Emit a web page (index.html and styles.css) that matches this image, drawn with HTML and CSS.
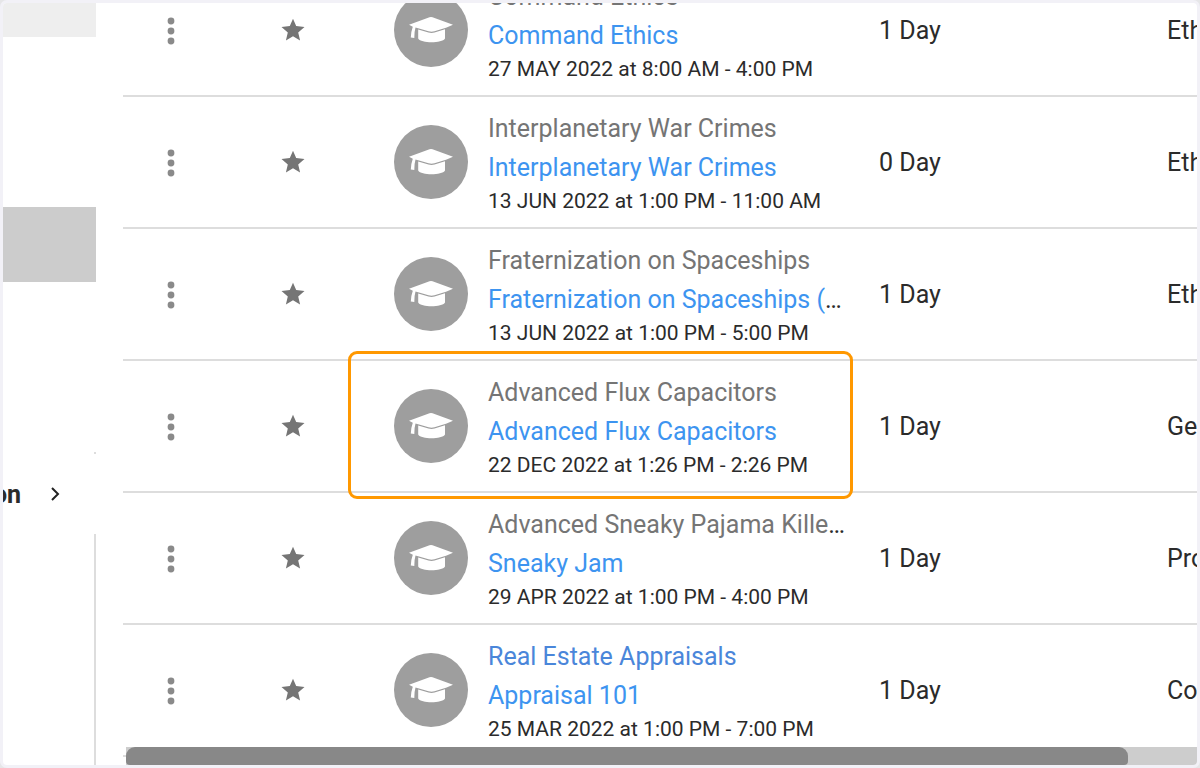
FILE: index.html
```
<!DOCTYPE html>
<html lang="en">
<head>
<meta charset="utf-8">
<meta name="viewport" content="width=device-width, initial-scale=1">
<title>Courses</title>
<link rel="stylesheet" href="styles.css">
</head>
<body>
<svg class="symbols" aria-hidden="true">
  <symbol id="dots" viewBox="0 0 8 30"><circle cx="4" cy="6" r="3.4"/><circle cx="4" cy="16" r="3.4"/><circle cx="4" cy="26" r="3.4"/></symbol>
  <symbol id="star" viewBox="0 0 24 24"><path d="M12 0.800L15.200 8.100L23.500 8.900L17.200 14.400L19.100 22.500L12 18.300L4.900 22.500L6.800 14.400L0.500 8.900L8.800 8.100Z"/></symbol>
  <symbol id="cap" viewBox="0 0 74 74"><path d="M15 31.800L35.500 24.300Q37 23.800 38.500 24.300L59 31.800L52 34.800L40.500 38.300Q37.500 39.100 34.500 38.300L21.500 34.600Q20.200 39 20.300 45L16.800 44.500Q17 38.500 18.800 33.700Z"/><path d="M24.200 36.600L34.500 39.600Q37.500 40.400 40.500 39.600L51 36.200V45.600C48 50.600 27 50.600 24.200 45.600Z"/></symbol>
</svg>
<div class="frame">
  <aside class="sidebar">
    <div class="block block-light"></div>
    <div class="block block-dark"></div>
    <div class="side-rule side-rule-end"></div>
    <a class="side-link" href="#">on
      <svg class="chevron" viewBox="0 0 10 14" aria-hidden="true"><path d="M2 1L8 7L2 13"/></svg>
    </a>
    <div class="side-rule"></div>
  </aside>
  <main class="content">
    <table class="courses">
      <colgroup><col class="col-menu"><col class="col-star"><col class="col-course"><col class="col-days"><col class="col-type"></colgroup>
      <tbody>
        <tr>
          <td><button aria-label="More options"><svg class="dots"><use href="#dots"/></svg></button></td>
          <td><button aria-label="Favorite"><svg class="star"><use href="#star"/></svg></button></td>
          <td class="course"><div class="entry"><svg class="avatar" aria-hidden="true"><use href="#cap"/></svg><div class="details"><div class="line"><span class="name">Command Ethics</span></div><div class="line"><a href="#">Command Ethics</a></div><div class="date">27 MAY 2022 at 8:00 AM - 4:00 PM</div></div></div></td>
          <td class="value">1 Day</td><td class="value">Eth</td>
        </tr>
        <tr>
          <td><button aria-label="More options"><svg class="dots"><use href="#dots"/></svg></button></td>
          <td><button aria-label="Favorite"><svg class="star"><use href="#star"/></svg></button></td>
          <td class="course"><div class="entry"><svg class="avatar" aria-hidden="true"><use href="#cap"/></svg><div class="details"><div class="line"><span class="name">Interplanetary War Crimes</span></div><div class="line"><a href="#">Interplanetary War Crimes</a></div><div class="date">13 JUN 2022 at 1:00 PM - 11:00 AM</div></div></div></td>
          <td class="value">0 Day</td><td class="value">Eth</td>
        </tr>
        <tr>
          <td><button aria-label="More options"><svg class="dots"><use href="#dots"/></svg></button></td>
          <td><button aria-label="Favorite"><svg class="star"><use href="#star"/></svg></button></td>
          <td class="course"><div class="entry"><svg class="avatar" aria-hidden="true"><use href="#cap"/></svg><div class="details"><div class="line"><span class="name">Fraternization on Spaceships</span></div><div class="line"><a href="#">Fraternization on Spaceships (</a>…</div><div class="date">13 JUN 2022 at 1:00 PM - 5:00 PM</div></div></div></td>
          <td class="value">1 Day</td><td class="value">Eth</td>
        </tr>
        <tr>
          <td><button aria-label="More options"><svg class="dots"><use href="#dots"/></svg></button></td>
          <td><button aria-label="Favorite"><svg class="star"><use href="#star"/></svg></button></td>
          <td class="course highlighted"><div class="entry"><svg class="avatar" aria-hidden="true"><use href="#cap"/></svg><div class="details"><div class="line"><span class="name">Advanced Flux Capacitors</span></div><div class="line"><a href="#">Advanced Flux Capacitors</a></div><div class="date">22 DEC 2022 at 1:26 PM - 2:26 PM</div></div></div></td>
          <td class="value">1 Day</td><td class="value">Ge</td>
        </tr>
        <tr>
          <td><button aria-label="More options"><svg class="dots"><use href="#dots"/></svg></button></td>
          <td><button aria-label="Favorite"><svg class="star"><use href="#star"/></svg></button></td>
          <td class="course"><div class="entry"><svg class="avatar" aria-hidden="true"><use href="#cap"/></svg><div class="details"><div class="line"><span class="name">Advanced Sneaky Pajama Kille</span>…</div><div class="line"><a href="#">Sneaky Jam</a></div><div class="date">29 APR 2022 at 1:00 PM - 4:00 PM</div></div></div></td>
          <td class="value">1 Day</td><td class="value">Pro</td>
        </tr>
        <tr>
          <td><button aria-label="More options"><svg class="dots"><use href="#dots"/></svg></button></td>
          <td><button aria-label="Favorite"><svg class="star"><use href="#star"/></svg></button></td>
          <td class="course"><div class="entry"><svg class="avatar" aria-hidden="true"><use href="#cap"/></svg><div class="details"><div class="line"><a class="visited" href="#">Real Estate Appraisals</a></div><div class="line"><a href="#">Appraisal 101</a></div><div class="date">25 MAR 2022 at 1:00 PM - 7:00 PM</div></div></div></td>
          <td class="value">1 Day</td><td class="value">Co</td>
        </tr>
      </tbody>
    </table>
    <div class="scrollbar"><div class="thumb"></div></div>
  </main>
</div>
</body>
</html>
```
FILE: styles.css
```
* { box-sizing: border-box; }

body {
  margin: 0;
  background: #e6e6e8;
  color: #2b2b2b;
  font-family: Roboto, "Liberation Sans", sans-serif;
  font-size: 25px;
}

a { color: #3d94f0; text-decoration: none; }

.symbols { display: none; }

.frame {
  display: flex;
  height: 100vh;
  border: 3px solid #f2f1f7;
  border-radius: 7px;
  background: #fff;
  overflow: hidden;
}

/* Left navigation strip */
.sidebar {
  display: flex;
  flex-direction: column;
  flex: none;
  width: 93px;
}

.block-light { height: 34px; background: #eee; }
.block-dark { height: 75px; margin: 170px 0; background: #ccc; }

.side-link {
  display: flex;
  align-items: center;
  justify-content: flex-end;
  gap: 29px;
  height: 80px;
  padding-right: 36px;
  overflow: hidden;
  color: #2b2b2b;
  font-weight: 700;
}

.chevron {
  flex: none;
  width: 10px;
  height: 14px;
  fill: none;
  stroke: #222;
  stroke-width: 2;
}

.side-rule { flex: 1; border-right: 2px solid #ddd; }
.side-rule-end { flex: none; height: 2px; }

/* Course list */
.content {
  position: relative;
  flex: 1;
  min-width: 0;
  padding-left: 27px;
  overflow: hidden;
}

.courses {
  width: 100%;
  margin-top: -38px;
  table-layout: fixed;
  border-collapse: separate;
  border-spacing: 0;
}

.col-menu { width: 96px; }
.col-star { width: 147px; }
.col-course { width: 487px; }
.col-days { width: 288px; }

td {
  height: 132px;
  padding: 0;
  border-bottom: 2px solid #ddd;
  white-space: nowrap;
}

button {
  display: flex;
  margin: 0 auto;
  padding: 0;
  border: 0;
  background: none;
}

.dots { width: 8px; height: 30px; fill: #8a8a8a; }
.star { width: 24px; height: 24px; fill: #757575; }

.entry {
  display: flex;
  align-items: center;
  gap: 20px;
  padding-left: 28px;
}

.avatar {
  flex: none;
  width: 74px;
  height: 74px;
  border-radius: 50%;
  background: #9e9e9e;
  fill: #fff;
}

.line { line-height: 39px; }
.name { color: #757575; }
.visited { color: #4a86da; }
.date { font-size: 21px; line-height: 28px; }
.value { padding-left: 26px; }

.highlighted { position: relative; }

.highlighted::after {
  content: "";
  position: absolute;
  inset: -10px 0 -8px -18px;
  border: 3px solid #ff9800;
  border-radius: 9px;
  pointer-events: none;
}

/* Horizontal scrollbar overlaying the list */
.scrollbar {
  position: absolute;
  right: 0;
  bottom: 0;
  left: 30px;
  height: 18px;
  background: #cdcdcd;
}

.thumb {
  width: 93.6%;
  height: 18px;
  border-radius: 9px 9px 4px 4px;
  background: #888;
}
```
